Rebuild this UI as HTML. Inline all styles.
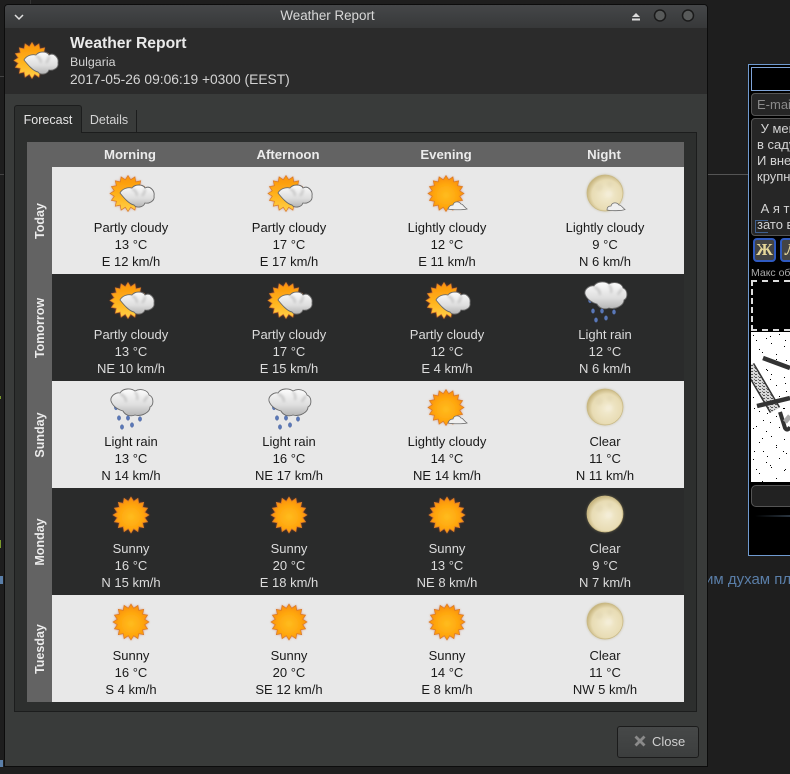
<!DOCTYPE html>
<html><head><meta charset="utf-8">
<style>
html,body{margin:0;padding:0;width:790px;height:774px;overflow:hidden;background:#1e1e1e;font-family:"Liberation Sans","Noto Sans CJK SC",sans-serif;}
div{position:absolute;box-sizing:border-box}
.t{white-space:nowrap}
.win{left:4px;top:4px;width:704px;height:763px;background:#393b3a;border:1px solid #0c0c0c;border-radius:4px 4px 0 0;overflow:hidden}
.tb{left:0;top:0;width:645px;height:23px;color:#d8d8d8;font-size:13.400px;line-height:22px;text-align:center}
.tbg{left:0;top:0;width:702px;height:23px;background:linear-gradient(#454749,#373839)}
.hd{left:0;top:23px;width:702px;height:66px;background:#2b2b2b}
.row{left:52px;width:632px;height:107px}
.l{background:#e8e8e8;color:#1a1a1a}
.d{background:#2a2b2b;color:#dcdcdc}
.c{top:0;width:158px;height:107px;text-align:center;font-size:13px;line-height:17px}
.c svg{position:absolute;left:55px;top:3px;overflow:visible}
.c p{position:absolute;margin:0;left:0;width:158px;top:52px}
.h{top:142px;height:25px;width:158px;text-align:center;color:#ebebeb;font-weight:bold;font-size:13.200px;line-height:25px}
.day{left:27px;width:25px;height:107px;background:#636363}
.day span{position:absolute;left:12.500px;top:53.500px;transform:translate(-50%,-50%) rotate(-90deg);color:#ebebeb;font-weight:bold;font-size:12.500px;white-space:nowrap}
.ru{left:757px;color:#d4d4d4;font-size:13px;white-space:nowrap;line-height:16px}
</style></head><body>
<svg width="0" height="0" style="position:absolute">
<defs>
<radialGradient id="sg" cx="50%" cy="55%" r="55%"><stop offset="0" stop-color="#ffbc1e"/><stop offset=".55" stop-color="#ffa80f"/><stop offset="1" stop-color="#f98a06"/></radialGradient>
<linearGradient id="sp" x1="0" y1="0" x2="0" y2="1"><stop offset="0" stop-color="#fb9308"/><stop offset=".55" stop-color="#ffb31c"/><stop offset="1" stop-color="#ffd04a"/></linearGradient>
<radialGradient id="mg" cx="55%" cy="55%" r="55%"><stop offset="0" stop-color="#f3ecd2"/><stop offset=".75" stop-color="#e8dcb4"/><stop offset="1" stop-color="#c8b680"/></radialGradient>
<linearGradient id="cg" x1="0" y1="0" x2="0" y2="1"><stop offset="0" stop-color="#fcfcfc"/><stop offset=".6" stop-color="#dedede"/><stop offset="1" stop-color="#b4b4b4"/></linearGradient>
<filter id="gl" x="-30%" y="-30%" width="160%" height="160%"><feGaussianBlur stdDeviation="1.200"/></filter>
<filter id="sf" x="-10%" y="-10%" width="120%" height="120%"><feGaussianBlur stdDeviation=".35"/></filter>
<polygon id="star" points="18,0 13.700,2.700 16.600,6.900 11.600,7.800 12.700,12.700 7.800,11.600 6.900,16.600 2.700,13.700 0,18 -2.700,13.700 -6.900,16.600 -7.800,11.600 -12.700,12.700 -11.600,7.800 -16.600,6.900 -13.700,2.700 -18,0 -13.700,-2.700 -16.600,-6.900 -11.600,-7.800 -12.700,-12.700 -7.800,-11.600 -6.900,-16.600 -2.700,-13.700 0,-18 2.700,-13.700 6.900,-16.600 7.800,-11.600 12.700,-12.700 11.600,-7.800 16.600,-6.900 13.700,-2.700"/>
<symbol id="sun" viewBox="0 0 48 44" overflow="visible">
<use href="#star" transform="translate(24,24)" fill="#c8481a" opacity=".6" filter="url(#gl)"/>
<use href="#star" transform="translate(24,24)" fill="url(#sg)" stroke="#d87a2c" stroke-width=".7" filter="url(#sf)"/>
</symbol>
<symbol id="partly" viewBox="0 0 48 44" overflow="visible">
<use href="#star" transform="translate(21,23.500)" fill="#c8481a" opacity=".6" filter="url(#gl)"/>
<use href="#star" transform="translate(21,23.500)" fill="url(#sp)" stroke="#d87a2c" stroke-width=".7" filter="url(#sf)"/>
<path d="M13 23C15 19 20 17 25 18C28 14 36 14 38 18C43 15 48 21 47 26C48 31 42 34 38 33C36 38 29 38 27 35C22 34 17 28 13 23Z" fill="url(#cg)" stroke="#6a6a6a" stroke-width=".9" filter="url(#sf)"/>
<path d="M25 19C28 20 30 22 30 26M38 19C38 22 37 24 35 26" stroke="#bdbdbd" stroke-width="1.800" fill="none" filter="url(#gl)"/>
</symbol>
<symbol id="light" viewBox="0 0 48 44" overflow="visible">
<use href="#star" transform="translate(23,23.500)" fill="#c8481a" opacity=".6" filter="url(#gl)"/>
<use href="#star" transform="translate(23,23.500)" fill="url(#sg)" stroke="#d87a2c" stroke-width=".7" filter="url(#sf)"/>
<path d="M25 39C26 36 28 35 30 35C31 31 36 31 38 34C40 34 41 37 44 39C40 40 30 40 25 39Z" fill="#f0f0f0" stroke="#6e6e6e" stroke-width=".8" filter="url(#sf)"/>
</symbol>
<symbol id="moon" viewBox="0 0 48 44" overflow="visible">
<circle cx="24" cy="23" r="18.500" fill="#a89a68" opacity=".45" filter="url(#gl)"/>
<circle cx="24" cy="23" r="18" fill="url(#mg)" stroke="#c8b884" stroke-width=".7"/>
<circle cx="18" cy="17" r="4" fill="#e2d7b2" opacity=".6" filter="url(#gl)"/><circle cx="29" cy="14" r="3" fill="#e2d7b2" opacity=".6" filter="url(#gl)"/><circle cx="28" cy="24" r="3.500" fill="#f5efdc" opacity=".7" filter="url(#gl)"/>
</symbol>
<symbol id="moonl" viewBox="0 0 48 44" overflow="visible">
<use href="#moon" width="48" height="44"/>
<path d="M26 40C26 37 28 36 30 36C31 32 36 32 38 35C40 35 41 37 44 39.500C40 41 30 41 26 40Z" fill="#f0f0f0" stroke="#6e6e6e" stroke-width=".8" filter="url(#sf)"/>
</symbol>
<symbol id="rain" viewBox="0 0 48 44" overflow="visible">
<g fill="#5a78b8" stroke="#44598c" stroke-width=".3" filter="url(#sf)"><ellipse cx="9" cy="23.500" rx="1.700" ry="2.400"/><ellipse cx="12" cy="34" rx="1.700" ry="2.400"/><ellipse cx="21" cy="34" rx="1.700" ry="2.400"/><ellipse cx="33" cy="35" rx="1.700" ry="2.400"/><ellipse cx="15" cy="43" rx="1.700" ry="2.400"/><ellipse cx="25" cy="41" rx="1.700" ry="2.400"/></g>
<g transform="translate(0,3)"><path d="M4 14C3 9 9 5 13 6C16 1 24 1 28 4C33 1 41 3 42 8C47 10 47 18 43 20C43 25 35 30 28 28C23 30 18 28 16 24C12 23 6 20 4 14Z" fill="url(#cg)" stroke="#6a6a6a" stroke-width=".9" filter="url(#sf)"/>
<path d="M13 7C16 8 19 10 19 15M28 5C30 7 31 9 30 13M41 9C40 10 38 12 37 15" stroke="#bdbdbd" stroke-width="1.800" fill="none" filter="url(#gl)"/></g>
</symbol>
</defs>
</svg>

<!-- background items -->
<div style="left:707px;top:174px;width:41px;height:1px;background:#555"></div>
<div style="left:30px;top:0;width:1px;height:4px;background:#333"></div>
<div style="left:0;top:76px;width:4px;height:1px;background:#444"></div>
<div style="left:0;top:174px;width:4px;height:1px;background:#444"></div>
<div style="left:0;top:396px;width:1px;height:3px;background:#7a9a2a"></div>
<div style="left:0;top:540px;width:1px;height:8px;background:#7a9a2a"></div>
<div style="left:0;top:576px;width:3px;height:8px;background:#5a7ea8"></div>
<div style="left:0;top:760px;width:3px;height:7px;background:#5a7ea8"></div>
<div class="t" style="left:708px;top:571px;width:82px;height:18px;overflow:hidden;color:#5a7ea8;font-size:15px;line-height:18px;text-indent:-3px">им духам пл</div>

<!-- right panel -->
<div style="left:748px;top:64px;width:60px;height:492px;background:#000;border:1px solid #6f9ad0;border-right:0"></div>
<div style="left:751px;top:67px;width:50px;height:24px;border:1px solid #7fa4d8;background:#000"></div>
<div style="left:751px;top:93px;width:50px;height:23px;background:#262626;border:1px solid #555;border-radius:4px"></div>
<div class="t" style="left:757px;top:96px;color:#8a8a8a;font-size:13px;line-height:17px">E-mai</div>
<div style="left:751px;top:118px;width:50px;height:118px;background:#262626;border:1px solid #555;border-radius:4px"></div>
<div class="ru" style="top:121px">&nbsp;У мен</div>
<div class="ru" style="top:137px">в саду</div>
<div class="ru" style="top:153px">И вне</div>
<div class="ru" style="top:169px">крупн</div>
<div class="ru" style="top:201px">&nbsp;А я т</div>
<div class="ru" style="top:217px">зато в</div>
<div style="left:755px;top:220px;width:13px;height:13px;border:1px solid #3e5f8e;border-width:1px 0 1px 1px"></div>
<div style="left:753px;top:238px;width:23px;height:24px;background:#444;border:2px solid #2f5ac0;border-radius:4px;color:#e6d79a;font:bold 17px/20px 'Liberation Serif','Noto Serif CJK SC',serif;text-align:center">Ж</div>
<div style="left:780px;top:238px;width:20px;height:24px;background:#444;border:2px solid #2f5ac0;border-radius:4px;color:#e6d79a;font:italic bold 17px/20px 'Liberation Serif',serif;padding-left:3px">Л</div>
<div class="t" style="left:751px;top:266px;color:#aaa;font-size:10.500px;line-height:14px">Макс об</div>
<div style="left:751px;top:280px;width:50px;height:51px;border:2px dashed #ddd;border-right:0"></div>
<div style="left:751px;top:332px;width:39px;height:150px;background:#fff;overflow:hidden">
<svg width="39" height="150" style="position:absolute;left:0;top:0">
<defs>
<pattern id="n" width="37" height="31" patternUnits="userSpaceOnUse"><g fill="#000"><rect x="2" y="3" width="1" height="1"/><rect x="15" y="6" width="1" height="1"/><rect x="28" y="2" width="1" height="1"/><rect x="20" y="11" width="1" height="1"/><rect x="33" y="14" width="1" height="1"/><rect x="8" y="17" width="1" height="1"/><rect x="25" y="22" width="1" height="1"/><rect x="12" y="26" width="1" height="1"/><rect x="35" y="28" width="1" height="1"/></g></pattern>
<pattern id="n2" width="29" height="43" patternUnits="userSpaceOnUse"><g fill="#000"><rect x="5" y="8" width="1" height="1"/><rect x="19" y="4" width="1" height="1"/><rect x="11" y="20" width="1" height="1"/><rect x="25" y="27" width="1" height="1"/><rect x="3" y="33" width="1" height="1"/><rect x="16" y="38" width="1" height="1"/></g></pattern>
<pattern id="st" width="4" height="3" patternUnits="userSpaceOnUse"><rect width="4" height="3" fill="#d8d8d8"/><rect x="0" y="0" width="2" height="1" fill="#555"/><rect x="3" y="2" width="1" height="1" fill="#777"/></pattern>
</defs>
<rect width="39" height="150" fill="url(#n)"/>
<rect width="39" height="150" fill="url(#n2)"/>
<path d="M-2 34L24 78" stroke="#333" stroke-width="12" fill="none"/>
<path d="M-2 34L24 78" stroke="url(#st)" stroke-width="9" fill="none"/>
<path d="M12 26L39 36" stroke="#333" stroke-width="4.500"/>
<path d="M6 74L39 66" stroke="#333" stroke-width="4.500"/>
<path d="M29 80L34 96C36 99 38 97 39 95" stroke="#333" stroke-width="4" fill="none"/>
<path d="M34 90L39 84" stroke="#aaa" stroke-width="5" fill="none"/>
</svg></div>
<div style="left:751px;top:485px;width:45px;height:22px;background:#222;border:1px solid #555;border-radius:5px"></div>
<div style="left:755px;top:515px;width:35px;height:2px;background:linear-gradient(90deg,#000,#2a3540)"></div>

<!-- window -->
<div class="win">
<div class="tbg"></div>
<div class="tb">Weather Report</div>
<svg width="702" height="23" style="position:absolute;left:0;top:0">
<path d="M10 10L14 14L18 10" stroke="#e0e0e0" stroke-width="1.500" fill="none"/>
<path d="M627 12L631 8L635 12Z M627 13.500H635V15.500H627Z" fill="#dcdcdc"/>
<circle cx="655" cy="10.500" r="5.500" fill="#585a5a" stroke="#1a1a1a" stroke-width="1.500"/>
<circle cx="683" cy="10.500" r="5.500" fill="#585a5a" stroke="#1a1a1a" stroke-width="1.500"/>
</svg>
<div class="hd"></div>
</div>

<svg width="48" height="44" style="position:absolute;left:11px;top:37px;overflow:visible"><use href="#partly" width="48" height="44"/></svg>
<div class="t" style="left:70px;top:35px;color:#eaeaea;font-weight:bold;font-size:15.700px;line-height:18px">Weather Report</div>
<div class="t" style="left:70px;top:54px;color:#d4d4d4;font-size:12.400px;line-height:17px">Bulgaria</div>
<div class="t" style="left:70px;top:71px;color:#d4d4d4;font-size:13.800px;line-height:17px">2017-05-26 09:06:19 +0300 (EEST)</div>

<!-- notebook -->
<div style="left:14px;top:132px;width:683px;height:580px;background:#2d2f2e;border:1px solid #1c1d1d"></div>
<div style="left:82px;top:110px;width:55px;height:22px;border-right:1px solid #1c1d1d;color:#d4d4d4;font-size:12.500px;line-height:21px;text-align:center">Details</div>
<div style="left:14px;top:105px;width:68px;height:28px;background:#2d2f2e;border:1px solid #1c1d1d;border-bottom:0;border-radius:3px 3px 0 0;color:#e6e6e6;font-size:12.500px;line-height:28px;text-align:center">Forecast</div>

<!-- table header -->
<div style="left:27px;top:142px;width:657px;height:25px;background:#636363"></div>
<div class="h" style="left:51px">Morning</div>
<div class="h" style="left:209px">Afternoon</div>
<div class="h" style="left:367px">Evening</div>
<div class="h" style="left:525px">Night</div>

<div class="day" style="top:167px"><span>Today</span></div>
<div class="day" style="top:274px"><span>Tomorrow</span></div>
<div class="day" style="top:381px"><span>Sunday</span></div>
<div class="day" style="top:488px"><span>Monday</span></div>
<div class="day" style="top:595px"><span>Tuesday</span></div>

<div class="row l" style="top:167px">
<div class="c" style="left:0"><svg width="48" height="44"><use href="#partly" width="48" height="44"/></svg><p>Partly cloudy<br>13 °C<br>E 12 km/h</p></div>
<div class="c" style="left:158px"><svg width="48" height="44"><use href="#partly" width="48" height="44"/></svg><p>Partly cloudy<br>17 °C<br>E 17 km/h</p></div>
<div class="c" style="left:316px"><svg width="48" height="44"><use href="#light" width="48" height="44"/></svg><p>Lightly cloudy<br>12 °C<br>E 11 km/h</p></div>
<div class="c" style="left:474px"><svg width="48" height="44"><use href="#moonl" width="48" height="44"/></svg><p>Lightly cloudy<br>9 °C<br>N 6 km/h</p></div>
</div>
<div class="row d" style="top:274px">
<div class="c" style="left:0"><svg width="48" height="44"><use href="#partly" width="48" height="44"/></svg><p>Partly cloudy<br>13 °C<br>NE 10 km/h</p></div>
<div class="c" style="left:158px"><svg width="48" height="44"><use href="#partly" width="48" height="44"/></svg><p>Partly cloudy<br>17 °C<br>E 15 km/h</p></div>
<div class="c" style="left:316px"><svg width="48" height="44"><use href="#partly" width="48" height="44"/></svg><p>Partly cloudy<br>12 °C<br>E 4 km/h</p></div>
<div class="c" style="left:474px"><svg width="48" height="44"><use href="#rain" width="48" height="44"/></svg><p>Light rain<br>12 °C<br>N 6 km/h</p></div>
</div>
<div class="row l" style="top:381px">
<div class="c" style="left:0"><svg width="48" height="44"><use href="#rain" width="48" height="44"/></svg><p>Light rain<br>13 °C<br>N 14 km/h</p></div>
<div class="c" style="left:158px"><svg width="48" height="44"><use href="#rain" width="48" height="44"/></svg><p>Light rain<br>16 °C<br>NE 17 km/h</p></div>
<div class="c" style="left:316px"><svg width="48" height="44"><use href="#light" width="48" height="44"/></svg><p>Lightly cloudy<br>14 °C<br>NE 14 km/h</p></div>
<div class="c" style="left:474px"><svg width="48" height="44"><use href="#moon" width="48" height="44"/></svg><p>Clear<br>11 °C<br>N 11 km/h</p></div>
</div>
<div class="row d" style="top:488px">
<div class="c" style="left:0"><svg width="48" height="44"><use href="#sun" width="48" height="44"/></svg><p>Sunny<br>16 °C<br>N 15 km/h</p></div>
<div class="c" style="left:158px"><svg width="48" height="44"><use href="#sun" width="48" height="44"/></svg><p>Sunny<br>20 °C<br>E 18 km/h</p></div>
<div class="c" style="left:316px"><svg width="48" height="44"><use href="#sun" width="48" height="44"/></svg><p>Sunny<br>13 °C<br>NE 8 km/h</p></div>
<div class="c" style="left:474px"><svg width="48" height="44"><use href="#moon" width="48" height="44"/></svg><p>Clear<br>9 °C<br>N 7 km/h</p></div>
</div>
<div class="row l" style="top:595px">
<div class="c" style="left:0"><svg width="48" height="44"><use href="#sun" width="48" height="44"/></svg><p>Sunny<br>16 °C<br>S 4 km/h</p></div>
<div class="c" style="left:158px"><svg width="48" height="44"><use href="#sun" width="48" height="44"/></svg><p>Sunny<br>20 °C<br>SE 12 km/h</p></div>
<div class="c" style="left:316px"><svg width="48" height="44"><use href="#sun" width="48" height="44"/></svg><p>Sunny<br>14 °C<br>E 8 km/h</p></div>
<div class="c" style="left:474px"><svg width="48" height="44"><use href="#moon" width="48" height="44"/></svg><p>Clear<br>11 °C<br>NW 5 km/h</p></div>
</div>

<!-- close -->
<div style="left:617px;top:726px;width:82px;height:32px;background:linear-gradient(#464848,#3c3e3e);border:1px solid #1b1b1b;border-radius:3px"></div>
<svg width="14" height="14" style="position:absolute;left:633px;top:734px"><path d="M2.500 2.500L11.500 11.500M11.500 2.500L2.500 11.500" stroke="#8a8a8a" stroke-width="2.800"/></svg>
<div class="t" style="left:652px;top:733px;color:#cfcfcf;font-size:13px;line-height:17px">Close</div>
</body></html>
